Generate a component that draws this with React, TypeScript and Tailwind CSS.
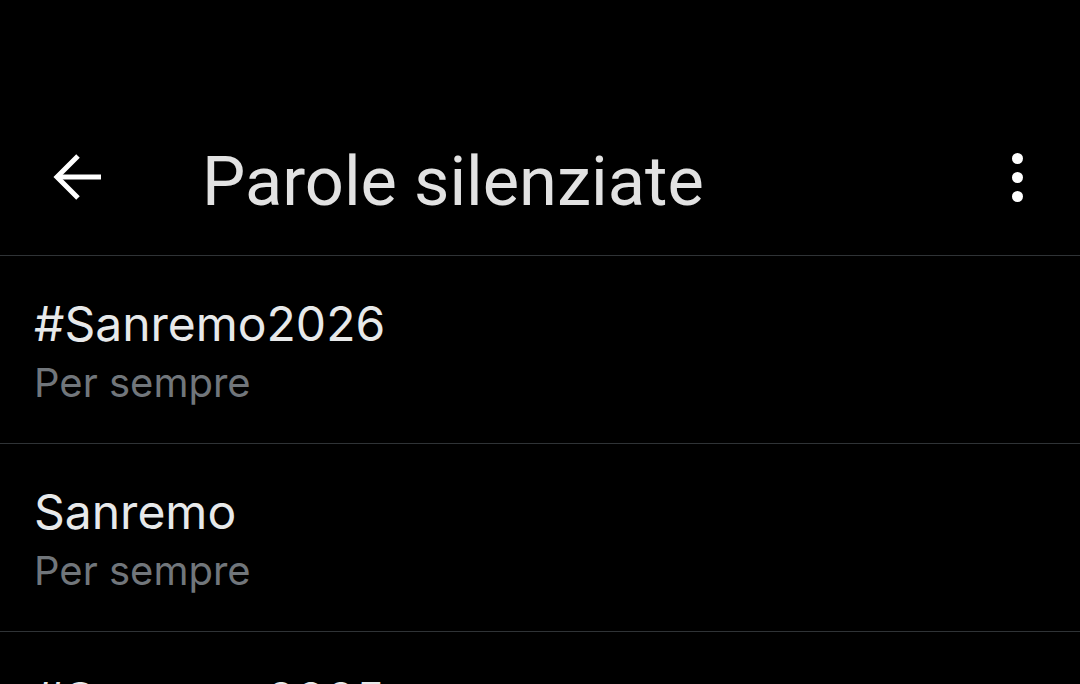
import React from "react";

const items = [
  { word: "#Sanremo2026", dur: "Per sempre" },
  { word: "Sanremo", dur: "Per sempre" },
  { word: "#Sanremo2025", dur: "Per sempre" },
];

export default function App() {
  return (
    <div className="w-[1080px] h-[684px] overflow-hidden bg-black flex flex-col">
      <div className="h-[128px] shrink-0" />
      <div className="h-[128px] shrink-0 flex items-start border-b border-[#2f3336]">
        <div className="w-[158px] pl-[52px] pt-[24px] flex items-center">
          <svg width="52" height="50" viewBox="0 0 52 50" fill="none" stroke="#ffffff" strokeWidth="5" strokeLinecap="butt" strokeLinejoin="miter">
            <path d="M49 25H8" />
            <path d="M26 4L5 25l21 21" />
          </svg>
        </div>
        <div
          className="pl-[44px] pt-[20px] text-[#e2e2e2] text-[68.6px] leading-[68px] flex-1"
          style={{ fontFamily: "Roboto, 'Noto Sans', sans-serif" }}
        >
          Parole silenziate
        </div>
        <div className="pr-[57px] pt-[25px] flex flex-col items-center gap-[8px]">
          <div className="w-[11px] h-[11px] rounded-full bg-white" />
          <div className="w-[11px] h-[11px] rounded-full bg-white" />
          <div className="w-[11px] h-[11px] rounded-full bg-white" />
        </div>
      </div>
      {items.map((it) => (
        <div
          key={it.word}
          className="h-[188px] shrink-0 border-b border-[#2f3336] px-[34px] pt-[40px] flex flex-col"
          style={{ fontFamily: "Inter, 'Liberation Sans', sans-serif" }}
        >
          <div className="text-[#e7e9ea] text-[48px] leading-[56px]">{it.word}</div>
          <div className="text-[#71767b] text-[40px] leading-[62px]">{it.dur}</div>
        </div>
      ))}
    </div>
  );
}
